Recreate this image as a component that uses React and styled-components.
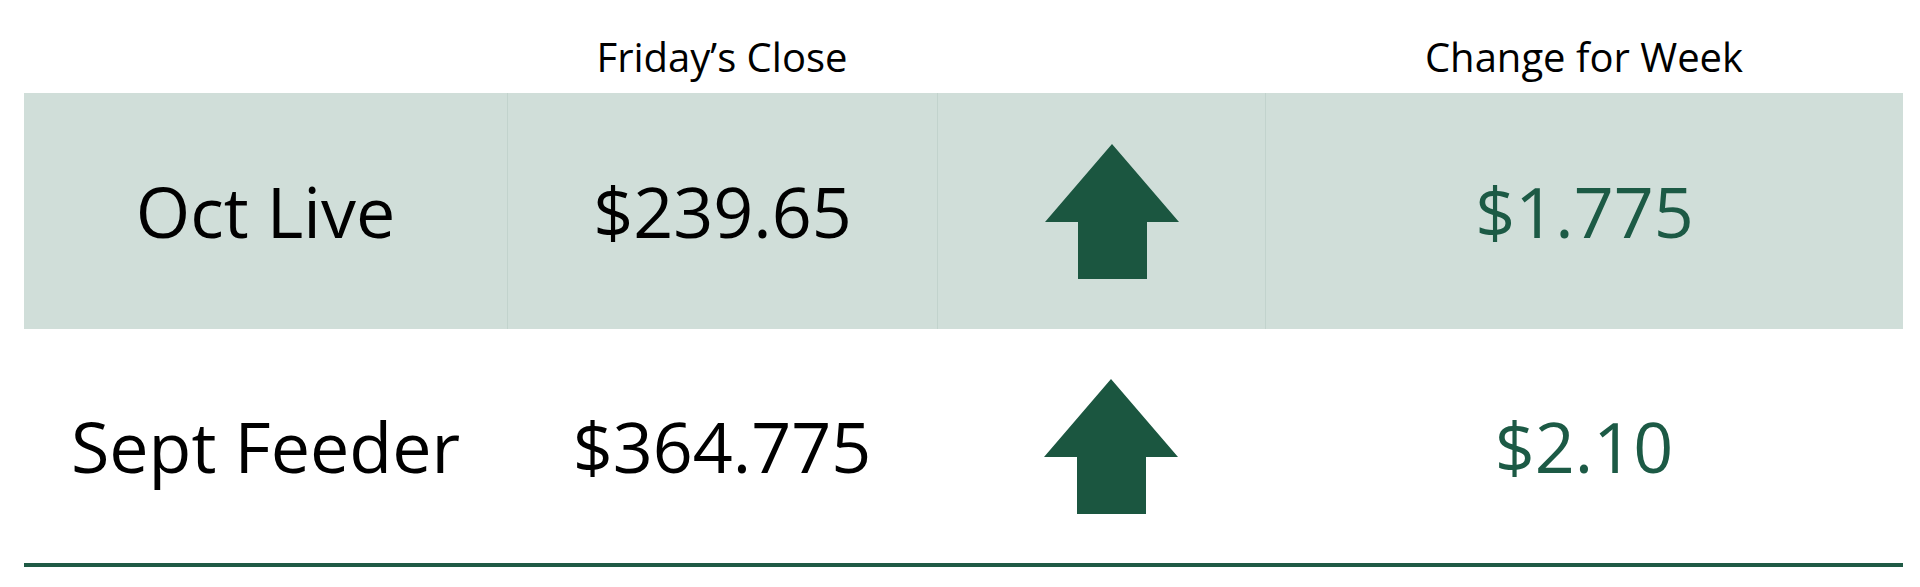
import styled, { createGlobalStyle } from 'styled-components';

const GlobalStyle = createGlobalStyle`
    html, body {
        margin: 0;
        padding: 0;
        background: #ffffff;
    }
    body {
        font-family: 'Open Sans', 'Liberation Sans', sans-serif;
    }
`

const Board = styled.div`
    width: 1879px;
    margin-left: 24px;
`

const Row = styled.div`
    display: grid;
    grid-template-columns: 483px 430px 328px 638px;
    height: ${props => props.$height}px;
    background: ${props => props.$shaded ? '#d0ded9' : 'transparent'};
`

const HeadCell = styled.div`
    display: flex;
    justify-content: center;
    align-items: center;
    padding-top: 20px;
    font-size: 40px;
    color: #000;
`

const Cell = styled.div`
    display: flex;
    justify-content: center;
    align-items: center;
    font-size: 70px;
    color: ${props => props.$green ? '#1c5a45' : '#000'};
    border-left: ${props => props.$divider ? '1px solid #c2d3cd' : 'none'};
`

const ArrowCell = styled(Cell)`
    padding-left: 20px;
`

const Rule = styled.div`
    height: 4px;
    background: #1f5a45;
    box-shadow: 0 1px 0 #b9d6cb;
`

const UpArrow = () => (
    <svg width="134" height="135" viewBox="0 0 134 135">
        <polygon points="67,0 134,78 102,78 102,135 33,135 33,78 0,78" fill="#1b5640" />
    </svg>
)

const rows = [
    { name: 'Oct Live', close: '$239.65', change: '$1.775', shaded: true },
    { name: 'Sept Feeder', close: '$364.775', change: '$2.10', shaded: false },
]

const App = () => {
    return (
        <>
            <GlobalStyle />
            <Board>
                <Row $height={93}>
                    <HeadCell />
                    <HeadCell>Friday’s Close</HeadCell>
                    <HeadCell />
                    <HeadCell>Change for Week</HeadCell>
                </Row>
                {rows.map(row => (
                    <Row key={row.name} $height={row.shaded ? 236 : 234} $shaded={row.shaded}>
                        <Cell>{row.name}</Cell>
                        <Cell $divider={row.shaded}>{row.close}</Cell>
                        <ArrowCell $divider={row.shaded}><UpArrow /></ArrowCell>
                        <Cell $divider={row.shaded} $green>{row.change}</Cell>
                    </Row>
                ))}
                <Rule />
            </Board>
        </>
    );
};

export default App;
